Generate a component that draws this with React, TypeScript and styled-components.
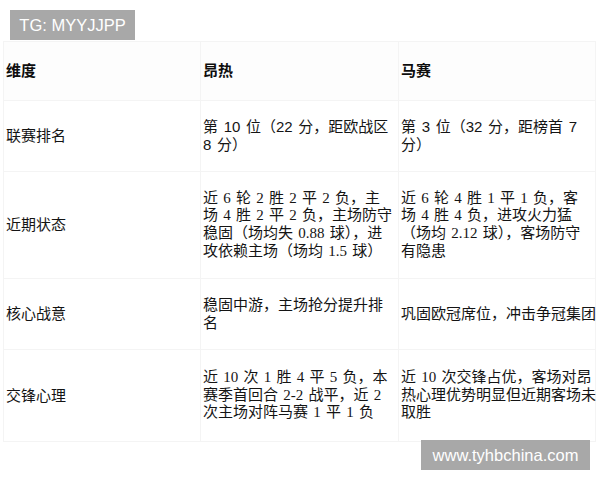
import React from 'react';
import styled, { createGlobalStyle } from 'styled-components';

const GlobalStyle = createGlobalStyle`
  body {
    margin: 0;
    background: #ffffff;
    font-family: "Liberation Sans", "Noto Sans CJK SC", sans-serif;
  }
`;

interface Row {
  label: string;
  a: string[];
  b: string[];
  height: number;
  serif?: boolean;
}

const rows: Row[] = [
  {
    label: '联赛排名',
    a: ['第 10 位（22 分，距欧战区', '8 分）'],
    b: ['第 3 位（32 分，距榜首 7', '分）'],
    height: 71,
  },
  {
    label: '近期状态',
    a: ['近 6 轮 2 胜 2 平 2 负，主', '场 4 胜 2 平 2 负，主场防守', '稳固（场均失 0.88 球），进', '攻依赖主场（场均 1.5 球）'],
    b: ['近 6 轮 4 胜 1 平 1 负，客', '场 4 胜 4 负，进攻火力猛', '（场均 2.12 球），客场防守', '有隐患'],
    height: 107,
    serif: true,
  },
  {
    label: '核心战意',
    a: ['稳固中游，主场抢分提升排', '名'],
    b: ['巩固欧冠席位，冲击争冠集团'],
    height: 71,
  },
  {
    label: '交锋心理',
    a: ['近 10 次 1 胜 4 平 5 负，本', '赛季首回合 2-2 战平，近 2', '次主场对阵马赛 1 平 1 负'],
    b: ['近 10 次交锋占优，客场对昂', '热心理优势明显但近期客场未', '取胜'],
    height: 92,
    serif: true,
  },
];

const App = () => {
  return (
    <Page>
      <GlobalStyle />
      <Table>
        <colgroup>
          <col style={{ width: 197 }} />
          <col style={{ width: 198 }} />
          <col style={{ width: 197 }} />
        </colgroup>
        <thead>
          <tr>
            <HeadCell>维度</HeadCell>
            <HeadCell>昂热</HeadCell>
            <HeadCell>马赛</HeadCell>
          </tr>
        </thead>
        <tbody>
          {rows.map((row) => (
            <BodyRow key={row.label} $height={row.height}>
              <LabelCell>{row.label}</LabelCell>
              <DataCell $serif={row.serif}>
                {row.a.map((line, i) => (
                  <Line key={i}>{line}</Line>
                ))}
              </DataCell>
              <DataCell $serif={row.serif}>
                {row.b.map((line, i) => (
                  <Line key={i}>{line}</Line>
                ))}
              </DataCell>
            </BodyRow>
          ))}
        </tbody>
      </Table>
      <Watermark $pos="top">TG: MYYJJPP</Watermark>
      <Watermark $pos="bottom">www.tyhbchina.com</Watermark>
    </Page>
  );
};

const Page = styled.div`
  position: relative;
  width: 600px;
  height: 480px;
  padding: 41px 0 0 3px;
  box-sizing: border-box;
  overflow: hidden;
  background: #ffffff;
`;

const Table = styled.table`
  width: 592px;
  border-collapse: collapse;
  table-layout: fixed;
  color: #141414;
  font-size: 15px;
  line-height: 17.6px;
`;

const HeadCell = styled.th`
  height: 58px;
  padding: 0 2px;
  text-align: left;
  vertical-align: middle;
  font-weight: bold;
  font-family: "Liberation Sans", "Noto Sans CJK SC", sans-serif;
  color: #0d0d0d;
  border: 1px solid #f4f4f4;
  background: #fdfdfd;
`;

const BodyRow = styled.tr<{ $height: number }>`
  height: ${({ $height }) => $height}px;
`;

const LabelCell = styled.td`
  padding: 0 2px;
  vertical-align: middle;
  font-family: "Liberation Sans", "Noto Sans CJK SC", sans-serif;
  border: 1px solid #f4f4f4;
`;

const DataCell = styled.td<{ $serif?: boolean }>`
  padding: 0 2px;
  vertical-align: middle;
  word-spacing: 1.5px;
  font-family: ${({ $serif }) =>
    $serif
      ? '"Liberation Serif", "Noto Sans CJK SC", serif'
      : '"Liberation Sans", "Noto Sans CJK SC", sans-serif'};
  border: 1px solid #f4f4f4;
`;

const Line = styled.div`
  white-space: nowrap;
`;

const Watermark = styled.div<{ $pos: 'top' | 'bottom' }>`
  position: absolute;
  ${({ $pos }) =>
    $pos === 'top'
      ? 'left: 10px; top: 10px; width: 125px;'
      : 'left: 421px; top: 440px; width: 169px;'}
  height: 30px;
  background: #a8a8a8;
  color: #ffffff;
  font-family: "Liberation Sans", Arial, sans-serif;
  font-size: 16.5px;
  line-height: 30px;
  text-align: center;
`;

export default App;
